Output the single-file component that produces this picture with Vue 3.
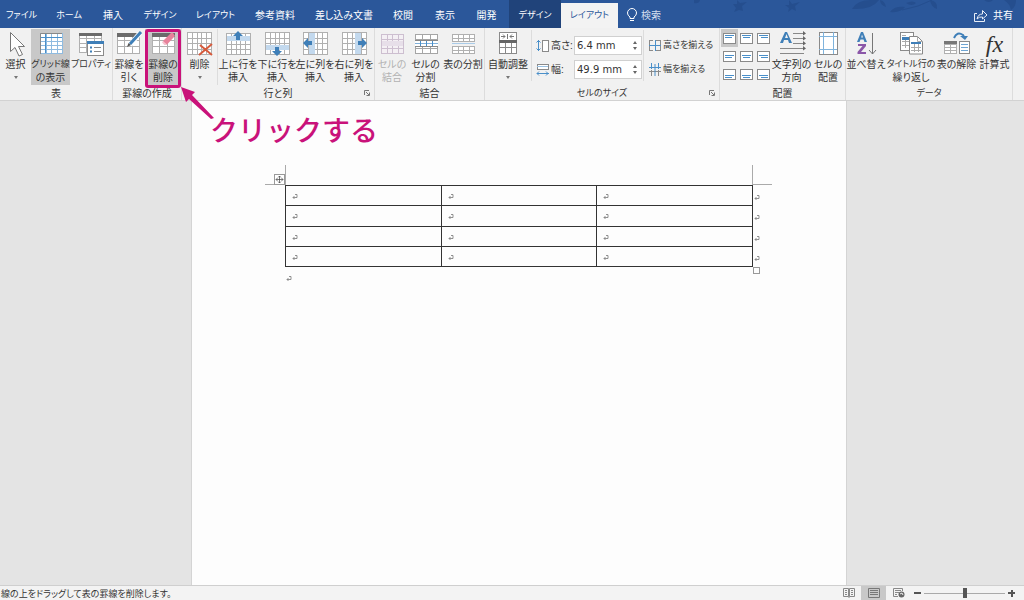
<script setup>
import { ref } from 'vue'

const tabs = ['ファイル', 'ホーム', '挿入', 'デザイン', 'レイアウト', '参考資料', '差し込み文書', '校閲', '表示', '開発', 'デザイン', 'レイアウト']
const heightValue = ref('6.4 mm')
const widthValue = ref('49.9 mm')
const zoom = ref(50)

// Captions that are mostly katakana are set one size smaller.
const isDense = (text) => (text.match(/[ァ-ヶー]/g) || []).length >= 3

const box = (x, y, w, h, fill = '#fff', stroke = '#8a8a8a') =>
  `<rect x="${x + 0.5}" y="${y + 0.5}" width="${w}" height="${h}" fill="${fill}" stroke="${stroke}"/>`
const line = (d, stroke = '#8a8a8a', width = 1) =>
  `<path d="${d}" fill="none" stroke="${stroke}" stroke-width="${width}"/>`
const sheet = (x, y, w, h, cols, rows, stroke = '#b0b0b0', fill = '#fff') => {
  let d = ''
  for (let i = 1; i < cols; i++) d += `M${x + Math.round((w * i) / cols) + 0.5} ${y}v${h}`
  for (let i = 1; i < rows; i++) d += `M${x} ${y + Math.round((h * i) / rows) + 0.5}h${w}`
  return box(x, y, w, h, fill, stroke) + line(d, stroke)
}
const bar = (x, y, w, h, fill) => `<rect x="${x}" y="${y}" width="${w}" height="${h}" fill="${fill}"/>`
const tint = '#c3d9ee'
const blue = '#3f7fb8'

const icons = {
  select: '<path d="M8.500 1.500V20.500L13 16.500L17 25L20.500 23.500L16.500 15.500H22.500Z" fill="#fff" stroke="#777"/>',
  gridlines: sheet(3, 2, 22, 20, 4, 5, '#8fbbe0') + line('M8.500 2V22M3 6.500H25', '#4a8fc9') + line('M3.500 23V2.500H25', '#888'),
  properties: sheet(2, 2, 22, 19, 3, 4) + bar(2, 2, 23, 3, '#6b6b6b') + box(10, 10, 16, 14) + bar(10, 10, 17, 3, blue) +
    line('M13 16.500h2M13 20.500h2', blue, 2) + line('M17 16.500h7M17 20.500h7', '#888'),
  draw: sheet(2, 2, 22, 20, 3, 3) + bar(2, 2, 23, 4, '#6b6b6b') + line('M15 14L25 2', '#fff', 5) + line('M15 13L26 1', blue, 3) +
    '<path d="M12 16l1.500-4 2.500 2z" fill="#555"/>',
  erase: sheet(3, 2, 22, 20, 3, 3) + bar(3, 2, 23, 4, '#6b6b6b') + '<path d="M14 10L22 2Q23 1 24 2L26 5L18 13.500H15Z" fill="#e8829b"/><path d="M14 10l4 3.500h-3l-2-2z" fill="#f7c3cf"/>',
  remove: sheet(1, 1, 24, 22, 5, 4) + line('M14 14L26 24M26 13L13 24', '#d65a3c', 2),
  above: sheet(2, 2, 24, 21, 5, 4) + bar(3, 5, 23, 5, tint) + '<path d="M14 0l5 5h-3v4h-4v-4h-3z" fill="#3f7fb8"/>',
  below: sheet(2, 1, 24, 22, 5, 4) + bar(3, 14, 23, 5, tint) + '<path d="M14 25l5-5h-3v-4h-4v4h-3z" fill="#3f7fb8"/>',
  left: sheet(2, 1, 24, 22, 5, 4) + bar(8, 2, 6, 21, tint) + '<path d="M2 12l5-5v3h4v4h-4v3z" fill="#3f7fb8"/>',
  right: sheet(2, 1, 24, 22, 5, 4) + bar(15, 2, 6, 21, tint) + '<path d="M27 12l-5-5v3h-4v4h4v3z" fill="#3f7fb8"/>',
  merge: sheet(3, 3, 22, 19, 4, 4, '#cdbfd0', '#f4f0f4') + bar(4, 10, 21, 5, '#e7dfe9'),
  split: sheet(3, 3, 22, 19, 3, 4, '#a5a5a5') + bar(3, 9, 23, 7, '#fff') + line('M3 9.500h23M3 15.500h23', '#888') +
    line('M3 12.500h23', '#7fb0da') + line('M8.500 10v5M14.500 10v5M20.500 10v5', '#4a8fc9'),
  splitTable: sheet(3, 3, 22, 7, 4, 2) + line('M3 12.500h23', '#a9cbe8', 1) + sheet(3, 15, 22, 7, 4, 2),
  autofit: box(5, 1, 17, 21) + line('M7 5.500h4M16 5.500h4M13.500 3v5M9 3.500l2 2-2 2M18 3.500l-2 2 2 2', '#777') + bar(5, 9, 18, 3, '#666') +
    line('M5 16.500h18M11.500 12v10M17.500 12v10', '#888'),
  direction: '<path d="M2 12L7 1h2l5 11h-3l-1-3H6l-1 3zM7 7h3L8.500 3z" fill="#3f7fb8" fill-rule="evenodd"/>' +
    line('M15 2.500h11M15 7.500h11M15 12.500h11M2 17.500h24M2 22.500h24', '#888') + '<path d="M25 0l3 2.500-3 2zM25 5l3 2.500-3 2zM25 10l3 2.500-3 2zM25 15l3 2.500-3 2z" fill="#666"/>',
  margins: box(5, 1, 18, 22) + line('M9.500 1v22M19.500 1v22M5 5.500h18M5 18.500h18', '#7fb3dc'),
  sort: '<path d="M5 11L9 1h2l4 10h-2.500l-1-2.500h-3L7.500 11zM9.200 6.500h1.800L10 3.500z" fill="#3f7fb8" fill-rule="evenodd"/><path d="M6 13h8v2l-5 6h5v2H5.500v-2l5-6H6z" fill="#8b57a8"/>' +
    line('M20.500 2v21M17 19l3.500 4 3.500-4', '#777'),
  repeat: box(3, 1, 13, 18) + line('M5 4.500h4M5 14.500h9M5 10.500h9M8.500 7v10', '#aaa') + bar(5, 6, 9, 3, blue) +
    '<path d="M12.500 5.500h8l5 5v12.500h-13z" fill="#fff" stroke="#888"/>' + line('M20.500 5.500v5h5M14 19.500h10M14 16.500h10M17.500 12v9M21.500 12v9', '#aaa') + bar(14, 11, 10, 2, blue),
  convert: sheet(1, 10, 12, 12, 2, 4) + bar(1, 10, 13, 3, '#777') + box(16, 10, 10, 12) + line('M18 13.500h7M18 16.500h7M18 19.500h7', '#6fa5d3') +
    line('M11 7Q14 0 20 4L21 6', blue, 2) + '<path d="M17 5h8l-3 4z" fill="#3f7fb8"/>',
}

const smallIcons = {
  height: line('M2.500 1v11M.500 3.500l2-2 2 2M.500 9.500l2 2 2-2', '#4a8fc9') + box(6, 1, 6, 11),
  width: box(1, 1, 11, 5) + line('M1 3.500h11', '#9bc2e3') + line('M1 10.500h12M3 8.500l-2 2 2 2M10 8.500l2 2-2 2', '#4a8fc9'),
  rows: line('M1.500 1v11M1 1.500h4M1 11.500h4M7 1.500h6M7 11.500h6M12.500 1v11') + line('M1 6.500h12M7.500 1v11', '#4a8fc9'),
  columns: line('M1 8.500h12M3.500 7v6M10.500 7v6') + line('M3.500 0v6M10.500 0v6M7 1v12M1 4.500h12', '#4a8fc9'),
}

const alignments = ['上揃え(左)', '上揃え(中央)', '上揃え(右)', '中央揃え(左)', '中央揃え', '中央揃え(右)', '下揃え(左)', '下揃え(中央)', '下揃え(右)']
function alignIcon(i) {
  const row = Math.floor(i / 3)
  const col = i % 3
  const y = 2 + row * 2
  const x = 2 + col
  return box(0, 0, 12, 10) + line(`M2 ${y + 0.5}h9M${x} ${y + 2.5}h7`, '#4a8fc9')
}

const groups = [
  { name: 'view', label: '表', items: [
    { icon: 'select', text: ['選択'], menu: true },
    { icon: 'gridlines', text: ['グリッド線', 'の表示'], on: true },
    { icon: 'properties', text: ['プロパティ'] },
  ] },
  { name: 'borders', label: '罫線の作成', items: [
    { icon: 'draw', text: ['罫線を', '引く'] },
    { icon: 'erase', text: ['罫線の', '削除'], on: true, marked: true },
  ] },
  { name: 'rows', label: '行と列', launcher: true, items: [
    { icon: 'remove', text: ['削除'], menu: true, split: true },
    { icon: 'above', text: ['上に行を', '挿入'] },
    { icon: 'below', text: ['下に行を', '挿入'] },
    { icon: 'left', text: ['左に列を', '挿入'] },
    { icon: 'right', text: ['右に列を', '挿入'] },
  ] },
  { name: 'merge', label: '結合', items: [
    { icon: 'merge', text: ['セルの', '結合'], disabled: true },
    { icon: 'split', text: ['セルの', '分割'] },
    { icon: 'splitTable', text: ['表の分割'] },
  ] },
  { name: 'size', label: 'セルのサイズ', launcher: true, size: true, items: [
    { icon: 'autofit', text: ['自動調整'], menu: true },
  ] },
  { name: 'align', label: '配置', align: true, items: [
    { icon: 'direction', text: ['文字列の', '方向'] },
    { icon: 'margins', text: ['セルの', '配置'] },
  ] },
  { name: 'data', label: 'データ', items: [
    { icon: 'sort', text: ['並べ替え'] },
    { icon: 'repeat', text: ['タイトル行の', '繰り返し'] },
    { icon: 'convert', text: ['表の解除'] },
    { icon: 'formula', text: ['計算式'] },
  ] },
]
</script>

<template>
  <div class="word" lang="ja">
    <header class="tabbar">
      <svg class="leaves" width="330" height="28" viewBox="0 0 330 28" aria-hidden="true">
        <g fill="#254e8e">
          <path d="M43 0l3 3 7-1-5 4 1 5-4-1-5 2 2-4-3-4h4z" />
          <path d="M95 0l3 4 8-2-5 4 1 5-4-2-4 3 1-4-4-3h4z" />
          <path d="M158 9q5-9 19-9h8q-7 10-27 9zM186 0q5 1 6 7-6-2-6-7z" />
          <path d="M196 12q4-6 15-5-4 6-15 5zM212 3q7-3 10 0-4 4-10 0zM236 0q8 1 7 9-6-2-7-9zM310 0l12 0q0 7-5 10-1-6-7-10z" />
          <path d="M0 0h6q-1 4-6 3zM290 0h9q-4 4-9 0z" />
        </g>
        <path d="M208 10Q225 7 238 0" fill="none" stroke="#254e8e" />
      </svg>
      <nav class="tabs" aria-label="リボン">
        <button v-for="(tab, i) in tabs" :key="i" type="button" :class="{ contextual: i === 10, active: i === 11, dense: isDense(tab) }">{{ tab }}</button>
      </nav>
      <button class="search" type="button">
        <svg width="12" height="14" viewBox="0 0 12 14" aria-hidden="true">
          <path d="M4 10.500V9Q1.500 7.500 1.500 5a4.500 4.500 0 0 1 9 0Q10.500 7.500 8 9v1.500zM4 12.500h4" fill="none" stroke="#fff" />
        </svg>
        検索
      </button>
      <button class="share" type="button">
        <svg width="14" height="13" viewBox="0 0 14 13" aria-hidden="true">
          <path d="M3 4.500H.500v8h10V10M3 10Q4 5 8.500 5V1.500L13 6 8.500 10V8Q5 7.500 3 10z" fill="none" stroke="#e8eef7" />
        </svg>
        共有
      </button>
    </header>

    <div class="ribbon">
      <section v-for="g in groups" :key="g.name" class="group" :class="g.name">
        <div class="tools">
          <div v-if="g.align" class="alignments">
            <button v-for="(a, i) in alignments" :key="a" type="button" :aria-label="a" :class="{ on: i === 0 }">
              <svg width="13" height="11" viewBox="0 0 13 11" v-html="alignIcon(i)"></svg>
            </button>
          </div>
          <button v-for="it in g.items" :key="it.icon" type="button" class="tool" :class="{ on: it.on, marked: it.marked, split: it.split }" :disabled="it.disabled">
            <span v-if="it.icon === 'formula'" class="fx">fx</span>
            <svg v-else width="28" height="26" viewBox="0 0 28 26" aria-hidden="true" v-html="icons[it.icon]"></svg>
            <span v-for="t in it.text" :key="t" class="caption" :class="{ dense: isDense(t) }">{{ t }}</span>
            <span v-if="it.menu" class="caret"></span>
          </button>
          <template v-if="g.size">
            <div class="fields">
              <label for="cell-height"><svg width="14" height="14" viewBox="0 0 14 14" v-html="smallIcons.height"></svg>高さ:</label>
              <div class="spin">
                <input id="cell-height" v-model="heightValue" type="text" />
                <span class="steps"><i class="up"></i><i class="down"></i></span>
              </div>
              <label for="cell-width"><svg width="14" height="14" viewBox="0 0 14 14" v-html="smallIcons.width"></svg>幅:</label>
              <div class="spin">
                <input id="cell-width" v-model="widthValue" type="text" />
                <span class="steps"><i class="up"></i><i class="down"></i></span>
              </div>
            </div>
            <div class="distribute">
              <button type="button"><svg width="14" height="14" viewBox="0 0 14 14" v-html="smallIcons.rows"></svg>高さを揃える</button>
              <button type="button"><svg width="14" height="14" viewBox="0 0 14 14" v-html="smallIcons.columns"></svg>幅を揃える</button>
            </div>
          </template>
        </div>
        <div class="group-label" :class="{ dense: isDense(g.label) }">
          {{ g.label }}
          <svg v-if="g.launcher" class="launcher" width="6" height="6" viewBox="0 0 6 6" aria-hidden="true">
            <path d="M.500 5V.500H5M2 2l3 3M5.500 2.500v3h-3" fill="none" stroke="#777" />
          </svg>
        </div>
      </section>
      <div class="callout">
        <svg width="36" height="36" viewBox="0 0 36 36" aria-hidden="true">
          <path d="M1 1L15 6 12 9 34 32 31 33 9 13 6 16z" fill="#c9127a" />
        </svg>
        <strong>クリックする</strong>
      </div>
    </div>

    <main class="workspace">
      <article class="page">
        <div class="table-wrap">
          <svg class="corner-left" width="21" height="21" viewBox="0 0 21 21" aria-hidden="true">
            <path d="M20.500 0v20M0 19.500h20" fill="none" stroke="#aaa" />
            <rect x="9.500" y="9.500" width="10" height="10" fill="#fff" stroke="#999" />
            <path d="M11 14.500h7M14.500 11v7M13 12.500l1.500-1.500 1.500 1.500M13 16.500l1.500 1.500 1.500-1.500M12.500 13L11 14.500l1.500 1.500M16.500 13l1.500 1.500-1.500 1.500" fill="none" stroke="#444" stroke-width=".7" />
          </svg>
          <svg class="corner-right" width="21" height="21" viewBox="0 0 21 21" aria-hidden="true">
            <path d="M.500 0v20M0 19.500h20" fill="none" stroke="#aaa" />
          </svg>
          <table>
            <tbody>
              <tr v-for="r in 4" :key="r">
                <td v-for="c in 3" :key="c">
                  <svg width="6" height="6" viewBox="0 0 6 6"><path d="M3 .500h2v3H1M2.500 2L1 3.500 2.500 5" fill="none" stroke="#777" stroke-width=".8" /></svg>
                  <svg v-if="c === 3" class="row-end" width="6" height="6" viewBox="0 0 6 6"><path d="M3 .500h2v3H1M2.500 2L1 3.500 2.500 5" fill="none" stroke="#777" stroke-width=".8" /></svg>
                </td>
              </tr>
            </tbody>
          </table>
          <span class="resize"></span>
        </div>
        <p><svg width="6" height="6" viewBox="0 0 6 6"><path d="M3 .500h2v3H1M2.500 2L1 3.500 2.500 5" fill="none" stroke="#777" stroke-width=".8" /></svg></p>
      </article>
    </main>

    <footer class="status">
      <span class="message">線の上をドラッグして表の罫線を削除します。</span>
      <button type="button" aria-label="閲覧モード">
        <svg width="12" height="10" viewBox="0 0 12 10"><path d="M.500 .500h5v8h-5zM6.500 .500h5v8h-5zM2 2.500h2M2 4.500h2M2 6.500h2M8 2.500h2M8 4.500h2M8 6.500h2M6 1v9" fill="none" stroke="#888" /></svg>
      </button>
      <button type="button" class="on" aria-label="印刷レイアウト">
        <svg width="12" height="10" viewBox="0 0 12 10"><path d="M.500 .500h11v9H.500zM2 2.500h8M2 4.500h8M2 6.500h8" fill="none" stroke="#777" /></svg>
      </button>
      <button type="button" aria-label="Web レイアウト">
        <svg width="12" height="10" viewBox="0 0 12 10"><path d="M5 8.500H.500v-8h9V3M2 2.500h6M2 4.500h4M2 6.500h2" fill="none" stroke="#888" /><circle cx="8.500" cy="6.500" r="3" fill="#666" /><path d="M7 6l2-1 1 2" fill="none" stroke="#eee" /></svg>
      </button>
      <button type="button" class="step minus" aria-label="縮小"></button>
      <input v-model="zoom" type="range" min="0" max="100" aria-label="ズーム" />
      <button type="button" class="step plus" aria-label="拡大"></button>
    </footer>
  </div>
</template>

<style>
body { margin: 0; }
</style>

<style scoped>
.word {
  display: flex;
  flex-direction: column;
  min-height: 100vh;
  overflow: hidden;
  background: #f1f1f1;
  color: #333;
  font-family: "Liberation Sans", "Noto Sans CJK JP", sans-serif;
  font-size: 10px;
  line-height: 13px;
  font-feature-settings: "palt";
}
button, input {
  margin: 0;
  padding: 0;
  border: 0;
  background: none;
  color: inherit;
  font: inherit;
  font-feature-settings: inherit;
  white-space: nowrap;
}
svg { display: block; flex: none; }
.dense { font-size: 9px; }

.tabbar {
  position: relative;
  display: flex;
  height: 28px;
  background: #2b579a;
  color: #fff;
}
.leaves { position: absolute; top: 0; right: 0; }
.tabs {
  display: grid;
  grid-template-columns: 43px 52px 36px 58px 53px 66px 72px 46px 38px 45px 52px 57px;
}
.tabs button { padding-top: 2px; }
.tabs .contextual { background: #20437a; }
.tabs .active { margin-top: 3px; padding: 0; background: #f3f3f3; color: #2b579a; }
.search, .share { display: flex; align-items: center; gap: 3px; padding-top: 2px; }
.search { margin-left: 8px; color: #d5dfef; }
.share { position: relative; margin-left: auto; margin-right: 11px; gap: 5px; }

.ribbon {
  position: relative;
  display: flex;
  height: 72px;
  border-bottom: 1px solid #d2d2d2;
}
.group {
  display: flex;
  flex-direction: column;
  flex: none;
  box-sizing: border-box;
  border-right: 1px solid #dcdcdc;
}
.tools { display: grid; height: 58px; padding-top: 1px; box-sizing: border-box; }
.group-label { position: relative; padding-top: 2px; text-align: center; }
.launcher { position: absolute; right: 4px; top: 5px; }
.view .tools { grid-template-columns: 31px 39px 42px; }
.borders .tools { grid-template-columns: 32px 36px; }
.rows .tools { grid-template-columns: 36px 40px 38px 38px 40px; }
.merge .tools { grid-template-columns: 34px 33px 42px; }
.size .tools { grid-template-columns: 46px 113px 75px; }
.align .tools { grid-template-columns: 52px 39px 34px; }
.data .tools { grid-template-columns: 40px 50px 41px 35px; }
.tool {
  position: relative;
  display: flex;
  flex-direction: column;
  align-items: center;
  padding-top: 2px;
  min-width: 0;
}
.tool .caption { display: block; }
.tool svg { margin-bottom: 1px; }
.tool.on { background: #c8c8c8; }
.tool:disabled { color: #b1b1b1; }
.tool.split { border-right: 1px solid #dcdcdc; }
.tool.marked::after {
  content: "";
  position: absolute;
  inset: 0 0 -3px 0;
  border: 3px solid #c9127a;
  border-radius: 3px;
}
.caret {
  margin-top: 5px;
  border: 2px solid transparent;
  border-top: 3px solid #777;
  border-bottom: 0;
}
.fx {
  height: 27px;
  font-family: "Liberation Serif", serif;
  font-size: 24px;
  font-style: italic;
  line-height: 26px;
}
.fields {
  display: grid;
  grid-template-columns: 38px 68px;
  grid-template-rows: 19px 19px;
  row-gap: 5px;
  align-content: start;
  padding: 6px 0 0 4px;
  margin: 1px 0 4px;
  border-left: 1px solid #dcdcdc;
  border-right: 1px solid #dcdcdc;
}
.fields label { display: flex; align-items: center; gap: 1px; white-space: nowrap; }
.spin { display: flex; box-sizing: border-box; border: 1px solid #d0d0d0; background: #fff; }
.spin input { flex: 1; min-width: 0; padding-left: 2px; font-family: "DejaVu Sans", sans-serif; }
.steps { display: flex; flex-direction: column; justify-content: space-between; padding: 4px 4px; }
.steps i { border: 2px solid transparent; }
.steps .up { border-top: 0; border-bottom: 3px solid #666; }
.steps .down { border-bottom: 0; border-top: 3px solid #666; }
.distribute { display: flex; flex-direction: column; gap: 5px; padding: 7px 0 0 4px; font-size: 9px; }
.distribute button { display: flex; align-items: center; gap: 1px; height: 19px; }
.alignments {
  display: grid;
  grid-template-columns: repeat(3, 17px);
  grid-template-rows: repeat(3, 18px);
  justify-content: end;
}
.alignments button { display: grid; place-items: center; }
.alignments .on { background: #c8c8c8; }

.callout { position: absolute; left: 180px; top: 58px; display: flex; z-index: 2; }
.callout strong {
  margin: 26px 0 0 -6px;
  color: #c9127a;
  font-size: 28px;
  font-weight: 500;
  line-height: 40px;
  font-feature-settings: normal;
  white-space: nowrap;
}

.workspace { display: flex; flex: 1; background: #e4e4e4; }
.page {
  box-sizing: border-box;
  width: 64%;
  margin-left: 18.700%;
  padding: 84px 93px 0;
  border: 1px solid #d4d4d4;
  border-width: 0 1px;
  background: #fdfdfd;
}
.table-wrap { position: relative; }
table { width: 100%; height: 82px; border-collapse: collapse; table-layout: fixed; }
td { position: relative; padding: 3px 0 0 6px; border: 1px solid #333; line-height: 6px; }
.row-end { position: absolute; top: 9px; right: -8px; }
.corner-left { position: absolute; left: -20px; top: -20px; }
.corner-right { position: absolute; right: -20px; top: -20px; }
.resize { position: absolute; right: -7px; bottom: -7px; width: 5px; height: 5px; border: 1px solid #999; }
.page p { margin: 9px 0 0 1px; }

.status {
  display: flex;
  align-items: stretch;
  height: 14px;
  border-top: 1px solid #cfcfcf;
  background: #f3f3f3;
}
.message { margin: 2px auto 0 1px; font-size: 9px; line-height: 13px; white-space: nowrap; }
.status button { display: grid; place-items: center; width: 25px; }
.status .on { background: #c8c8c8; }
.status .step { position: relative; width: 13px; }
.step::before, .plus::after { content: ""; grid-area: 1 / 1; width: 7px; height: 2px; background: #555; }
.plus::after { width: 2px; height: 7px; }
.status .plus { margin-right: 6px; }
input[type="range"] { appearance: none; width: 81px; height: 14px; }
input[type="range"]::-webkit-slider-runnable-track { height: 1px; background: #aaa; }
input[type="range"]::-webkit-slider-thumb { appearance: none; width: 4px; height: 10px; margin-top: -5px; background: #555; }
</style>
